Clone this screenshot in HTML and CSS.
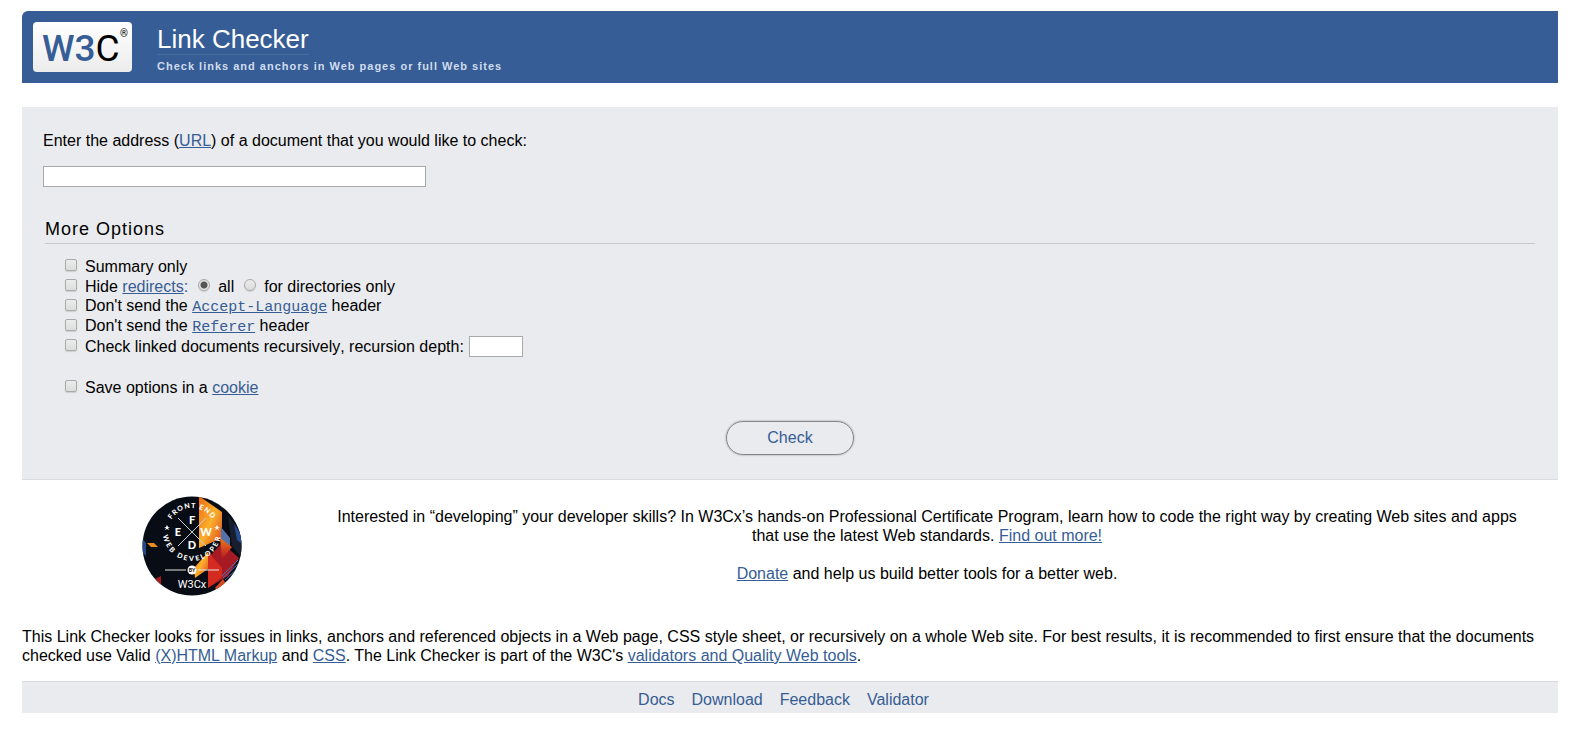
FILE: index.html
```html
<!DOCTYPE html>
<html lang="en">
<head>
  <meta charset="UTF-8" />
  <meta name="viewport" content="width=device-width, initial-scale=1.0"/>
  <title>W3C Link Checker</title>
  <link rel="stylesheet" href="styles.css">
</head>
<body>

  <header class="banner">
    <a class="logo" href="#" aria-label="W3C">
      <svg width="99" height="50" viewBox="0 0 99 50">
        <text x="9" y="39"><tspan class="logo-blue">W3</tspan><tspan class="logo-black">C</tspan></text>
        <text class="logo-reg" x="87" y="15">®</text>
      </svg>
    </a>
    <div class="banner-text">
      <h1><a href="#">Link Checker</a></h1>
      <p class="tagline">Check links and anchors in Web pages or full Web sites</p>
    </div>
  </header>

  <form class="checker" action="#">
    <p class="uri-label"><label for="uri">Enter the address (<a href="#">URL</a>) of a document that you would like to check:</label></p>
    <input class="uri" type="text" id="uri" name="uri">

    <fieldset class="options">
      <legend>More Options</legend>
      <div class="option">
        <input type="checkbox" id="summary"><label for="summary">Summary only</label>
      </div>
      <div class="option">
        <input type="checkbox" id="hide"><label for="hide">Hide <a href="#">redirects</a><span class="colon">:</span></label>
        <input type="radio" name="hide_type" id="hide_all" checked><label for="hide_all">all</label>
        <input type="radio" name="hide_type" id="hide_dir"><label for="hide_dir">for directories only</label>
      </div>
      <div class="option">
        <input type="checkbox" id="lang"><label for="lang">Don't send the <a href="#"><code>Accept-Language</code></a> header</label>
      </div>
      <div class="option">
        <input type="checkbox" id="referer"><label for="referer">Don't send the <a href="#"><code>Referer</code></a> header</label>
      </div>
      <div class="option">
        <input type="checkbox" id="recursive"><label for="recursive">Check linked documents recursively</label><label for="depth">, recursion depth:</label>
        <input class="depth" type="text" id="depth" name="depth">
      </div>
      <div class="option save">
        <input type="checkbox" id="cookie"><label for="cookie">Save options in a <a href="#">cookie</a></label>
      </div>
    </fieldset>

    <div class="submit">
      <button type="submit">Check</button>
    </div>
  </form>

  <section class="promo">
    <a class="badge" href="#" aria-label="Front-End Web Developer by W3Cx">
      <svg width="100" height="100" viewBox="0 0 100 100">
        <defs>
          <clipPath id="disc"><circle cx="50" cy="50" r="49.5"/></clipPath>
          <linearGradient id="flame" x1="0" y1="0" x2="1" y2="1">
            <stop offset="0" stop-color="#ee6a12"/>
            <stop offset="0.5" stop-color="#fbb02c"/>
            <stop offset="1" stop-color="#d8401d"/>
          </linearGradient>
          <linearGradient id="ember" x1="0" y1="0" x2="0" y2="1">
            <stop offset="0" stop-color="#ec7a1c"/>
            <stop offset="1" stop-color="#b8161f"/>
          </linearGradient>
          <path id="arc-top" d="M26 36 A 24 24 0 0 1 74 36"/>
          <path id="arc-bottom" d="M21 36 A 29 29 0 0 0 79 36"/>
        </defs>
        <g clip-path="url(#disc)">
          <rect width="100" height="100" fill="#080c14"/>
          <path d="M57 0 L80 16 L80 42 L57 52 Z" fill="url(#flame)"/>
          <path d="M79 31 L88 42 L88 59 L79 48 Z" fill="#5572ab"/>
          <path d="M86 20 L100 36 L100 62 L90 50 Z" fill="#18202f"/>
          <path d="M92 28 L100 40 L100 48 L95 44 Z" fill="#264d91"/>
          <path d="M52 72 L66 56 L66 73 L53 82 Z" fill="url(#flame)"/>
          <path d="M66 62 L80 47 L97 62 L86 80 L66 92 Z" fill="#a61a23"/>
          <path d="M66 56 L80 72 L80 81 L66 92 Z" fill="#d42a20"/>
          <path d="M78 42 L90 51 L80 63 Z" fill="url(#ember)"/>
          <path d="M80 80 L96 64 M81 82 L97 67 M83 84 L96 72" stroke="#4776bd" fill="none"/>
          <path d="M5 47 L12 47 L16 51 L9 51 Z" fill="#e58d22"/>
          <path d="M0 42 L4 47 L4 60 L0 56 Z" fill="#244a86"/>
          <path d="M13 83 L19 80 L19 92 L14 91 Z" fill="#a41c20"/>
          <path d="M73 92 L81 83 L84 88 L78 96 Z" fill="#d94a20"/>
        </g>
        <path d="M36 22 L64 50 M64 22 L36 50" stroke="#c9ccd2" fill="none"/>
        <text class="badge-ring"><textPath href="#arc-top" startOffset="50%">FRONT END</textPath></text>
        <text class="badge-ring badge-ring-low"><textPath href="#arc-bottom" startOffset="50%">WEB DEVELOPER</textPath></text>
        <text class="badge-letter" x="50" y="28">F</text>
        <text class="badge-letter" x="36" y="40">E</text>
        <text class="badge-letter" x="64" y="40">W</text>
        <text class="badge-letter" x="50" y="53">D</text>
        <path d="M25 29 l1 2 h2 l-2 1 l1 2 l-2 -1 l-2 1 l1 -2 l-2 -1 h2 Z M75 29 l1 2 h2 l-2 1 l1 2 l-2 -1 l-2 1 l1 -2 l-2 -1 h2 Z" fill="#fff"/>
        <path d="M23 74 H44 M56 74 H77" stroke="#e6e6e6" fill="none"/>
        <circle cx="50" cy="74" r="4.5" fill="#fff"/>
        <text class="badge-by" x="50" y="76">BY</text>
        <text class="badge-name" x="50" y="92">W3Cx</text>
      </svg>
    </a>
    <div class="promo-text">
      <p>Interested in “developing” your developer skills? In W3Cx’s hands-on Professional Certificate Program, learn how to code the right way by creating Web sites and apps that use the latest Web standards. <a href="#">Find out more!</a></p>
      <p><a href="#">Donate</a> and help us build better tools for a better web.</p>
    </div>
  </section>

  <p class="intro">This Link Checker looks for issues in links, anchors and referenced objects in a Web page, CSS style sheet, or recursively on a whole Web site. For best results, it is recommended to first ensure that the documents checked use Valid <a href="#">(X)HTML Markup</a> and <a href="#">CSS</a>. The Link Checker is part of the W3C's <a href="#">validators and Quality Web tools</a>.</p>

  <nav class="menu">
    <a href="#">Docs</a>
    <a href="#">Download</a>
    <a href="#">Feedback</a>
    <a href="#">Validator</a>
  </nav>

</body>
</html>
```
FILE: styles.css
```css
body {
  font-family: "Liberation Sans", Arial, sans-serif;
  font-size: 16px;
  line-height: 19px;
  color: #000;
  background: #fff;
  margin: 11px 19px 0 22px;
}
a {
  color: #365d95;
}
h1,
p {
  margin: 0;
}

/* banner */
.banner {
  display: flex;
  gap: 25px;
  padding: 11px 11px 10px;
  background: #365d95;
  border-top-left-radius: 6px;
}
.logo {
  height: 50px;
  background: linear-gradient(#fff, #ececec);
  border-radius: 4px;
}
.logo text {
  font-family: Roboto, sans-serif;
  font-size: 37px;
}
.logo .logo-blue {
  fill: #365d95;
  font-weight: 500;
}
.logo .logo-black {
  fill: #000;
}
.logo .logo-reg {
  font-size: 10px;
}
.banner h1 {
  font-size: 26px;
  font-weight: normal;
  line-height: 30px;
  padding-top: 2px;
}
.banner h1 a {
  display: inline-block;
  color: #fff;
  text-decoration: none;
  border-bottom: 1px solid #486ca0;
}
.tagline {
  font-size: 11px;
  font-weight: bold;
  line-height: 13px;
  letter-spacing: 1px;
  margin-top: 5px;
  color: #d0dcee;
}

/* form */
.checker {
  margin-top: 24px;
  padding: 24px 21px;
  background: #eaebee;
  border-bottom: 1px solid #d8dadd;
}
.checker input[type="text"] {
  box-sizing: border-box;
  height: 21px;
  padding: 1px 2px;
  border: 1px solid #a9a9a9;
  background: #fff;
  font-size: 14px;
}
.checker .uri {
  display: block;
  width: 383px;
  margin-top: 16px;
}
.options {
  min-width: 0;
  margin: 30px 2px 0;
  padding: 0;
  border: 0;
}
.options legend {
  box-sizing: border-box;
  width: 100%;
  padding: 1px 0 3px;
  margin-bottom: 12px;
  border-bottom: 1px solid #c8c9cd;
  font-size: 18px;
  line-height: 22px;
  letter-spacing: 1px;
}
.option {
  display: flex;
  align-items: center;
  height: 20px;
  padding-left: 20px;
  white-space: pre;
}
.option.save {
  margin-top: 21px;
}
.option .colon {
  color: #365d95;
}
.option code {
  font-family: "Liberation Mono", monospace;
  font-size: 15px;
}
.option input[type="checkbox"],
.option input[type="radio"] {
  appearance: none;
  box-sizing: border-box;
  width: 12px;
  height: 12px;
  margin: 0 8px 2px 0;
  border: 1px solid #aaa;
  border-radius: 2px;
  background: linear-gradient(#ececec, #dcdcdc);
  box-shadow: 0 1px 1px #ccc;
}
.option input[type="radio"] {
  margin-left: 10px;
  border-radius: 50%;
}
.option input[type="radio"]:checked {
  background: radial-gradient(circle, #555 3px, #e4e4e4 4px);
}
.option input[type="checkbox"]:checked {
  background: #555;
}
.option .depth {
  width: 54px;
  margin-left: 5px;
}
.submit {
  margin-top: 24px;
  text-align: center;
}
.submit button {
  width: 128px;
  height: 34px;
  border: 1px solid #85868a;
  border-radius: 17px;
  background: transparent;
  box-shadow: 0 0 2px #888;
  color: #365d95;
  font-family: inherit;
  font-size: 16px;
  cursor: pointer;
}

/* promo */
.promo {
  display: flex;
  gap: 85px;
  padding: 16px 31px 0 120px;
}
.badge {
  flex: none;
  height: 100px;
}
.badge text {
  font-family: Lato, sans-serif;
  font-weight: 900;
  fill: #fff;
  text-anchor: middle;
}
.badge .badge-ring {
  font-size: 7px;
  letter-spacing: 1px;
}
.badge .badge-ring-low {
  letter-spacing: 2px;
}
.badge .badge-letter {
  font-size: 11px;
}
.badge .badge-by {
  font-size: 5px;
  fill: #111;
}
.badge .badge-name {
  font-family: Roboto, sans-serif;
  font-size: 11px;
  font-weight: normal;
}
.promo-text {
  flex: 1;
  padding-top: 11px;
  text-align: center;
}
.promo-text p + p {
  margin-top: 19px;
}

/* bottom */
.intro {
  margin: 31px 0 16px;
}
.menu {
  display: flex;
  justify-content: center;
  gap: 17px;
  padding: 8px 13px 4px 0;
  border-top: 1px solid #d8dadd;
  background: #eaebee;
}
.menu a {
  text-decoration: none;
}
```
